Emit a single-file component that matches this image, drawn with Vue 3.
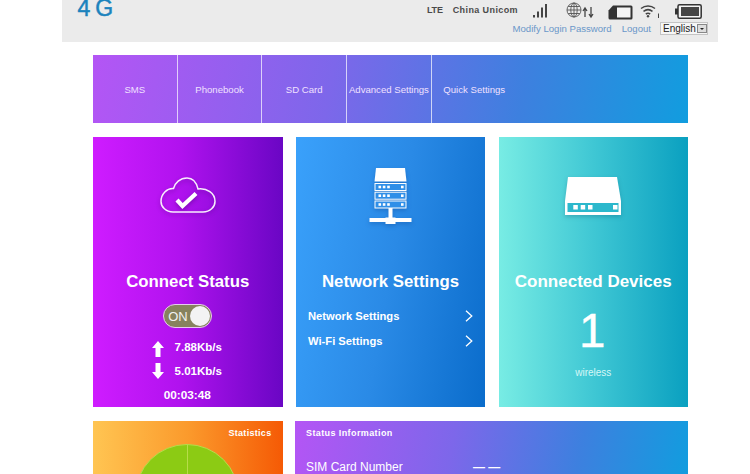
<template>
  <div class="page">
    <header class="top">
      <div class="brand">4 G</div>
      <div class="top-right">
        <div class="status-row">
          <span class="st lte">LTE</span>
          <span class="st unicom">China Unicom</span>
          <svg class="ic signal" width="16" height="18" viewBox="0 0 16 18">
            <rect x="1" y="14" width="2" height="2.500" fill="#444"/>
            <rect x="5" y="10.500" width="2" height="6" fill="#444"/>
            <rect x="9" y="6.500" width="2" height="10" fill="#444"/>
            <rect x="13" y="3" width="2" height="13.500" fill="#444"/>
          </svg>
          <svg class="ic globe" width="28" height="18" viewBox="0 0 28 18" fill="none" stroke="#555" stroke-width="0.900">
            <circle cx="8" cy="9" r="7"/>
            <ellipse cx="8" cy="9" rx="3.200" ry="7"/>
            <path d="M8 2v14M1 9h14M2.200 5.500h11.600M2.200 12.500h11.600"/>
            <path d="M19 16V7.500M17 10l2-3 2 3M25 6v9.500M23 13l2 3 2-3" stroke="#444" stroke-width="1.300"/>
          </svg>
          <svg class="ic sim" width="25" height="15" viewBox="0 0 25 15">
            <path d="M5 0.500h18a1.500 1.500 0 0 1 1.500 1.500v11a1.500 1.500 0 0 1-1.500 1.500H2a1.500 1.500 0 0 1-1.500-1.500V5.500z" fill="#333"/>
            <path d="M9 2.500h13.500v10H9z" fill="#f4f4f4"/>
          </svg>
          <svg class="ic wifi" width="21" height="14" viewBox="0 0 21 14" fill="none" stroke="#444" stroke-width="1.500">
            <path d="M1 4.500a11 11 0 0 1 14 0M3.500 7.300a7.500 7.500 0 0 1 9 0M5.800 10a4 4 0 0 1 4.400 0"/>
            <circle cx="8" cy="12.300" r="1.200" fill="#444" stroke="none"/>
            <path d="M18.500 9.500v4.500" stroke-width="1"/>
          </svg>
          <svg class="ic batt" width="27" height="15" viewBox="0 0 27 15">
            <rect x="0" y="4.500" width="3" height="6" fill="#333"/>
            <rect x="3" y="0.800" width="23.200" height="13.400" rx="1.500" fill="#f4f4f4" stroke="#333" stroke-width="1.500"/>
            <rect x="6" y="3" width="18" height="9" fill="#444"/>
          </svg>
        </div>
        <div class="link-row">
          <a class="lnk">Modify Login Password</a>
          <a class="lnk logout">Logout</a>
          <span class="lang"><span class="lang-text">English</span><span class="lang-btn"><i></i></span></span>
        </div>
      </div>
    </header>

    <nav class="menu">
      <div v-for="m in menu" :key="m" class="menu-item">{{ m }}</div>
    </nav>

    <section class="cards">
      <div class="card purple">
        <svg class="cloud" width="56" height="36" viewBox="0 0 56 36" fill="none">
          <path d="M13 35C6 35 1 30 1 24.500 1 17 7 11 13.500 11.500 15 6 20 1 27 1 33 1 36.500 5.500 38 12 47 11 55 16 55 24.500 55 30 50 35 43 35Z" stroke="#fff" stroke-width="1.500" opacity=".92"/>
          <path d="M17 23l5.500 6L36 16.500" stroke="#fff" stroke-width="4.200"/>
        </svg>
        <h2 class="title t-connect">Connect Status</h2>
        <div class="toggle"><span class="on">ON</span><span class="knob"></span></div>
        <div class="rate">
          <svg class="up" width="12" height="16" viewBox="0 0 12 16"><path d="M6 0l6 7H8.500v9h-5V7H0z" fill="#fff"/></svg>
          <span>7.88Kb/s</span>
        </div>
        <div class="rate r2">
          <svg width="12" height="16" viewBox="0 0 12 16"><path d="M6 16l6-7H8.500V0h-5v9H0z" fill="#fff"/></svg>
          <span>5.01Kb/s</span>
        </div>
        <div class="time">00:03:48</div>
      </div>

      <div class="card blue">
        <svg class="server" width="44" height="58" viewBox="0 0 44 58">
          <path d="M7 1h29l1.500 13.500H5.500z" fill="#fff"/>
          <g v-for="y in [16, 24.700, 33.500]" :key="y">
            <rect x="6" :y="y + 0.500" width="31" height="7" fill="#2f8fe8" stroke="#fff" stroke-width="1"/>
            <rect x="9.500" :y="y + 2.700" width="2.600" height="2.600" fill="#fff"/>
            <rect x="13.800" :y="y + 2.700" width="2.600" height="2.600" fill="#fff"/>
            <rect x="18.200" :y="y + 2.700" width="2.600" height="2.600" fill="#fff"/>
            <rect x="32" :y="y + 2.700" width="2.600" height="2.600" fill="#fff"/>
          </g>
          <rect x="19.500" y="41" width="4" height="10" fill="#fff"/>
          <rect x="0.500" y="51" width="42" height="4" fill="#fff"/>
          <rect x="16.500" y="50.500" width="10" height="6.500" fill="#fff"/>
        </svg>
        <h2 class="title t-net">Network Settings</h2>
        <div class="row r-net"><span>Network Settings</span><svg width="8" height="12" viewBox="0 0 8 12" fill="none"><path d="M1 0.700l5.800 5.300L1 11.300" stroke="#fff" stroke-width="1.300"/></svg></div>
        <div class="row r-wifi"><span>Wi-Fi Settings</span><svg width="8" height="12" viewBox="0 0 8 12" fill="none"><path d="M1 0.700l5.800 5.300L1 11.300" stroke="#fff" stroke-width="1.300"/></svg></div>
      </div>

      <div class="card teal">
        <svg class="router" width="58" height="40" viewBox="0 0 58 40">
          <path d="M4 1h49l4 24v14H1V25z" fill="#fff"/>
          <rect x="3.500" y="27" width="51" height="9" fill="#2cb8cc"/>
          <rect x="9.300" y="29" width="4.500" height="4.500" fill="#fff"/>
          <rect x="16.700" y="29" width="4.500" height="4.500" fill="#fff"/>
          <rect x="24" y="29" width="4.500" height="4.500" fill="#fff"/>
          <rect x="49" y="29" width="4.500" height="4.500" fill="#fff"/>
        </svg>
        <h2 class="title t-dev">Connected Devices</h2>
        <div class="count">1</div>
        <div class="wireless">wireless</div>
      </div>
    </section>

    <section class="bottom">
      <div class="stats">
        <div class="stats-title">Statistics</div>
        <div class="pie"><span class="pie-line"></span></div>
      </div>
      <div class="info">
        <div class="info-title">Status Information</div>
        <div class="info-row"><span class="label">SIM Card Number</span><span class="dash">— —</span></div>
      </div>
    </section>
  </div>
</template>

<script setup>
const menu = ['SMS', 'Phonebook', 'SD Card', 'Advanced Settings', 'Quick Settings']
</script>

<style>
html, body { margin: 0; background: #fff; overflow: hidden; }
</style>

<style scoped>
.page {
  width: 750px;
  height: 474px;
  overflow: hidden;
  font-family: "Liberation Sans", Arial, sans-serif;
  color: #fff;
}
.top {
  margin-left: 62px;
  width: 656px;
  height: 42px;
  background: #ebebeb;
  display: flex;
  justify-content: space-between;
}
.brand {
  margin: -8px 0 0 15.500px;
  height: 32px;
  font-size: 23px;
  line-height: 32px;
  word-spacing: -1.500px;
  -webkit-text-stroke: 0.5px #1b83bd;
  color: #1b83bd;
}
.top-right {
  width: 320px;
  display: flex;
  flex-direction: column;
  align-items: flex-end;
}
.status-row {
  height: 20px;
  display: flex;
  align-items: center;
  color: #4a4a4a;
  font-size: 9px;
  font-weight: 700;
  padding-right: 16px;
}
.lte { letter-spacing: -0.2px; }
.unicom { margin-left: 10px; letter-spacing: 0.4px; }
.signal { margin-left: 14px; }
.globe { margin-left: 18px; }
.sim { margin-left: 13.500px; margin-top: 4px; }
.wifi { margin-left: 7.500px; margin-top: 2px; }
.batt { margin-left: 14px; margin-top: 3px; }
.link-row {
  display: flex;
  align-items: center;
  height: 17px;
  padding-right: 10px;
  font-size: 9.600px;
}
.lnk { color: #6a97c9; }
.logout { margin-left: 10px; }
.lang {
  margin-left: 9px;
  width: 48px;
  height: 13px;
  box-sizing: border-box;
  border: 1px solid #c4c4c4;
  background: #f6f6f6;
  display: flex;
  align-items: center;
  justify-content: space-between;
  color: #222;
  font-size: 10px;
}
.lang-text { margin-left: 2px; }
.lang-btn {
  width: 10px;
  height: 9px;
  background: #ddd;
  border: 1px solid #888;
  box-sizing: border-box;
  display: flex;
  align-items: center;
  justify-content: center;
}
.lang-btn i {
  border-left: 2px solid transparent;
  border-right: 2px solid transparent;
  border-top: 2.500px solid #222;
}
.menu {
  margin: 13px 0 0 93px;
  width: 595px;
  height: 68px;
  display: flex;
  background: linear-gradient(100deg, #b455f5 0%, #7d67ea 40%, #3d80df 72%, #119ddf 100%);
}
.menu-item {
  width: 84.700px;
  box-sizing: border-box;
  border-right: 1px solid rgba(255, 255, 255, 0.7);
  display: flex;
  align-items: center;
  justify-content: center;
  font-size: 9.600px;
  color: #f0e0ff;
  white-space: nowrap;
}
.menu-item:nth-child(5) { border-right: 0; width: 85px; }
.cards {
  margin: 14px 0 0 93px;
  width: 595px;
  display: flex;
  justify-content: space-between;
}
.card {
  width: 189.500px;
  height: 270px;
  display: flex;
  flex-direction: column;
  align-items: center;
  box-sizing: border-box;
}
.purple { background: linear-gradient(90deg, #cf1cff 0%, #b112ef 45%, #6a06c4 100%); }
.blue { background: linear-gradient(100deg, #3aa1fb 0%, #2a8ae6 50%, #0a6ccb 100%); }
.teal { background: linear-gradient(90deg, #78ece4 0%, #3fc7d4 50%, #0aa0c0 100%); }
.cloud { margin-top: 40px; filter: drop-shadow(0 2px 2px rgba(60, 0, 100, 0.4)); }
.server { margin-top: 30px; filter: drop-shadow(0 2px 2px rgba(0, 40, 110, 0.25)); }
.router { margin-top: 39px; filter: drop-shadow(0 2px 2px rgba(0, 60, 90, 0.25)); }
.title {
  margin: 0;
  font-size: 16.800px;
  line-height: 22px;
  font-weight: 700;
  color: #fff;
  white-space: nowrap;
}
.t-connect { margin-top: 58px; }
.t-net { margin-top: 46px; }
.t-dev { margin-top: 55px; font-size: 17px; }
.toggle {
  margin-top: 11px;
  width: 49px;
  height: 24px;
  box-sizing: border-box;
  border: 1px solid #e8c8f0;
  border-radius: 12px;
  background: #87825e;
  display: flex;
  align-items: center;
  justify-content: space-between;
  padding: 0 1px 0 4px;
  font-size: 13px;
  color: #f2f2f2;
}
.knob {
  width: 20px;
  height: 20px;
  border-radius: 50%;
  background: #f3f3f3;
}
.rate {
  margin-top: 10px;
  display: flex;
  align-items: center;
  gap: 11px;
  font-size: 11.500px;
  font-weight: 700;
  height: 18px;
  margin-left: -2px;
}
.up { margin-top: 3px; }
.r2 { margin-top: 6px; }
.time { margin-top: 8px; font-size: 11.800px; font-weight: 700; line-height: 14px; margin-left: -1px; }
.row {
  width: 165px;
  display: flex;
  justify-content: space-between;
  align-items: center;
  font-size: 11.200px;
  font-weight: 700;
  height: 16px;
}
.r-net { margin-top: 15px; }
.r-wifi { margin-top: 8.500px; }
.count {
  margin-top: 9.500px;
  margin-left: -2px;
  font-size: 47.500px;
  line-height: 56px;
  -webkit-text-stroke: 0.4px #fff;
}
.wireless { margin-top: 8.500px; font-size: 10px; line-height: 12px; color: #d6f7f6; }
.bottom {
  margin: 14px 0 0 93px;
  width: 595px;
  display: flex;
  justify-content: space-between;
}
.stats {
  width: 189.500px;
  height: 60px;
  background: linear-gradient(90deg, #ffc552 0%, #fb9a2c 50%, #f55a05 100%);
  position: relative;
  overflow: hidden;
}
.stats-title {
  position: absolute;
  right: 11px;
  top: 7px;
  font-size: 9px;
  font-weight: 700;
  letter-spacing: 0.3px;
}
.pie {
  position: absolute;
  left: 42px;
  top: 23px;
  width: 104px;
  height: 104px;
  border-radius: 50%;
  background: #8ccb14;
  border: 1px solid #b7dc4a;
  box-sizing: border-box;
}
.pie-line {
  position: absolute;
  left: 51px;
  top: 0;
  width: 1px;
  height: 51px;
  background: #b7dc4a;
}
.info {
  width: 393px;
  height: 60px;
  box-sizing: border-box;
  background: linear-gradient(100deg, #b455f5 0%, #7d67ea 40%, #3d80df 72%, #119ddf 100%);
  padding: 6px 11px;
}
.info-title { font-size: 9px; font-weight: 700; letter-spacing: 0.4px; line-height: 12px; }
.info-row { margin-top: 20px; display: flex; font-size: 12px; line-height: 16px; }
.label { width: 167px; }
.dash { font-weight: 700; }
</style>
